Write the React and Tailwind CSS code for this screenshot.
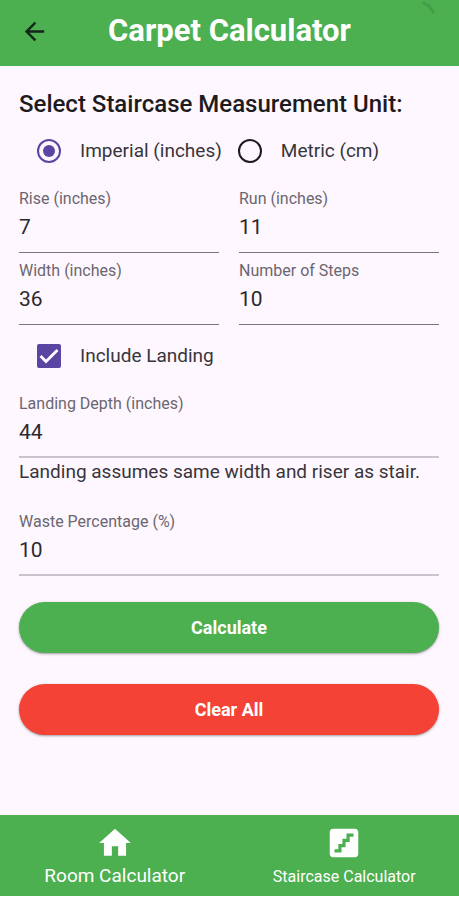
import { useId, useState } from "react";
import { MdArrowBack, MdHome, MdStairs } from "react-icons/md";

function Field({ label, value, onChange, light = false }) {
  const id = useId();
  return (
    <div
      className={
        light
          ? "flex min-w-0 flex-col border-b-2 border-[#cac4cf] pt-2 pb-1.5"
          : "flex min-w-0 flex-col border-b border-[#79747e] pt-2 pb-[7px]"
      }
    >
      <label htmlFor={id} className="text-[16px] leading-5 text-[#6b6670]">
        {label}
      </label>
      <input
        id={id}
        type="text"
        inputMode="numeric"
        value={value}
        onChange={(e) => onChange(e.target.value)}
        className="h-9 w-full bg-transparent text-[21px] text-[#2b292e] outline-none"
      />
    </div>
  );
}

function UnitOption({ label, value, unit, onSelect }) {
  return (
    <label className="flex items-center gap-[19px] text-[19px] leading-6 whitespace-nowrap text-[#38353b]">
      <input
        type="radio"
        name="unit"
        value={value}
        checked={unit === value}
        onChange={() => onSelect(value)}
        className="size-6 shrink-0 appearance-none rounded-full border-2 border-[#1d1b20] bg-clip-content p-1 checked:border-[#5b45a3] checked:bg-[#5b45a3]"
      />
      {label}
    </label>
  );
}

export default function App() {
  const [unit, setUnit] = useState("imperial");
  const [landing, setLanding] = useState(true);
  const [form, setForm] = useState({
    rise: "7",
    run: "11",
    width: "36",
    steps: "10",
    depth: "44",
    waste: "10",
  });
  const set = (key) => (value) => setForm((f) => ({ ...f, [key]: value }));
  const clear = () =>
    setForm({ rise: "", run: "", width: "", steps: "", depth: "", waste: "" });

  return (
    <div className="flex min-h-screen flex-col bg-[#fef7ff] font-['Roboto',sans-serif]">
      <header className="relative grid h-[66px] grid-cols-[48px_1fr_48px] items-center bg-[#4caf50] px-[10px] pb-1">
        <button type="button" aria-label="Back" className="flex size-12 items-center justify-center text-[#14261a]">
          <MdArrowBack size={29} />
        </button>
        <h1 className="text-center text-[31px] leading-10 font-bold whitespace-nowrap text-white">
          Carpet Calculator
        </h1>
        <svg
          viewBox="0 0 16 16"
          className="absolute top-0 right-[22px] size-4"
          fill="none"
          stroke="#3c9142"
          strokeWidth="3"
          strokeLinecap="round"
          aria-hidden="true"
        >
          <path d="M3 3 L8 6 L12 12" opacity="0.6" />
        </svg>
      </header>

      <main className="flex flex-1 flex-col pt-6 pr-5 pl-[19px]">
        <h2 className="text-[24px] leading-7 font-medium whitespace-nowrap text-[#1d1b20]">
          Select Staircase Measurement Unit:
        </h2>

        <div className="flex gap-4 pt-[21px] pb-[18px] pl-[18px]" role="radiogroup" aria-label="Measurement unit">
          <UnitOption label="Imperial (inches)" value="imperial" unit={unit} onSelect={setUnit} />
          <UnitOption label="Metric (cm)" value="metric" unit={unit} onSelect={setUnit} />
        </div>

        <div className="grid grid-cols-2 gap-x-5">
          <Field label="Rise (inches)" value={form.rise} onChange={set("rise")} />
          <Field label="Run (inches)" value={form.run} onChange={set("run")} />
          <Field label="Width (inches)" value={form.width} onChange={set("width")} />
          <Field label="Number of Steps" value={form.steps} onChange={set("steps")} />
        </div>

        <label className="flex items-center gap-[19px] pt-[19px] pb-[18px] pl-[18px] text-[19px] leading-6 text-[#38353b]">
          <span className="grid size-6 shrink-0">
            <input
              type="checkbox"
              checked={landing}
              onChange={(e) => setLanding(e.target.checked)}
              className="peer col-start-1 row-start-1 size-6 appearance-none rounded-xs border-2 border-[#49454f] checked:border-[#5b45a3] checked:bg-[#5b45a3]"
            />
            <svg
              viewBox="0 0 24 24"
              className="pointer-events-none invisible col-start-1 row-start-1 size-6 peer-checked:visible"
              fill="none"
              stroke="#fff"
              strokeWidth="2.8"
              aria-hidden="true"
            >
              <path d="M3.5 12 L9 17.5 L20.5 6" />
            </svg>
          </span>
          Include Landing
        </label>

        <Field light label="Landing Depth (inches)" value={form.depth} onChange={set("depth")} />
        <p className="pt-0.5 pb-5 text-[19px] leading-6 whitespace-nowrap text-[#38353b]">
          Landing assumes same width and riser as stair.
        </p>
        <Field light label="Waste Percentage (%)" value={form.waste} onChange={set("waste")} />

        <div className="flex flex-col gap-[31px] pt-[26px] pb-5">
          <button
            type="button"
            className="h-[51px] rounded-full bg-[#4caf50] text-[18px] font-bold text-white shadow-sm shadow-black/30"
          >
            Calculate
          </button>
          <button
            type="button"
            onClick={clear}
            className="h-[51px] rounded-full bg-[#f44336] text-[18px] font-bold text-white shadow-sm shadow-black/30"
          >
            Clear All
          </button>
        </div>
      </main>

      <nav className="grid h-[85px] grid-cols-2 border-b-4 border-white bg-[#4caf50] text-white">
        <button type="button" className="flex flex-col items-center pt-[9px]">
          <MdHome size={38} />
          <span className="text-[19px] leading-7">Room Calculator</span>
        </button>
        <button type="button" className="flex flex-col items-center pt-[9px]">
          <MdStairs size={38} />
          <span className="text-[16px] leading-[30px]">Staircase Calculator</span>
        </button>
      </nav>
    </div>
  );
}
